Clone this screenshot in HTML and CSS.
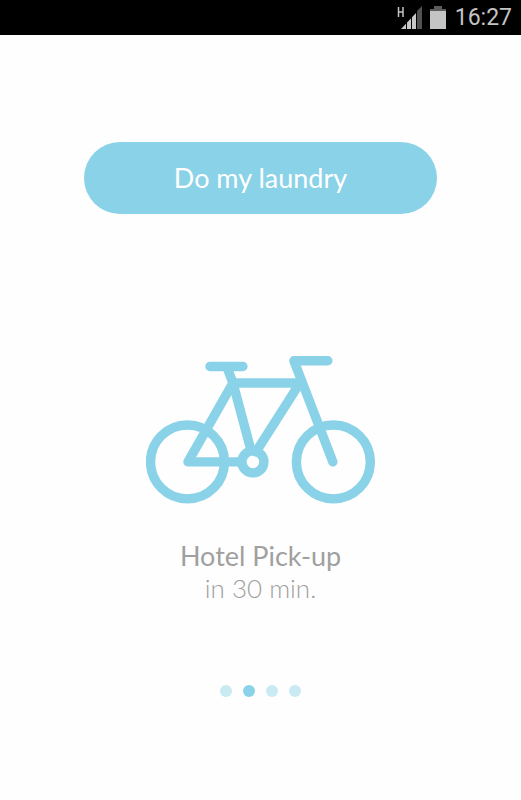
FILE: index.html
```html
<!DOCTYPE html>
<html lang="en">
<head>
<meta charset="UTF-8">
<meta name="viewport" content="width=device-width, initial-scale=1.0">
<title>Do my laundry</title>
<link rel="stylesheet" href="styles.css">
</head>
<body>
<header class="status-bar">
    <svg class="signal" viewBox="0 0 25 24" aria-hidden="true">
        <path d="M1.500 1v10M6 1v10M1.500 6H6" fill="none" stroke="#c4c4c4" stroke-width="1.500"/>
        <path d="M4 23L19 7v16z" fill="#c8c8c8"/>
        <path d="M20 5l5-5v23h-5z" fill="#515151"/>
        <path d="M9.500 15v8M14.500 10v13M19.500 5v18" stroke="#000" stroke-width="1"/>
    </svg>
    <svg class="battery" viewBox="0 0 16 24" aria-hidden="true">
        <path d="M4 0h8v3h4v3H0V3h4z" fill="#5c5c5c"/>
        <path d="M0 5h16v18H0z" fill="#c4c4c4"/>
    </svg>
    <span class="clock">16:27</span>
</header>
<main class="screen">
    <button class="laundry-button" type="button">Do my laundry</button>
    <svg class="bike" viewBox="0 0 230 148" aria-hidden="true">
        <g fill="none" stroke="#8ad2e7" stroke-width="9.4" stroke-linecap="round" stroke-linejoin="round">
            <circle cx="41.500" cy="106" r="37"/>
            <circle cx="187.500" cy="106" r="37"/>
            <circle cx="107" cy="106" r="11"/>
            <path d="M64 10.500h33"/>
            <path d="M81 11l6 16 18 67"/>
            <path d="M94 106H42l45-79h67l-44 69"/>
            <path d="M182 4.700h-34l39 101.300"/>
        </g>
    </svg>
    <section class="info">
        <h1>Hotel Pick-up</h1>
        <p>in 30 min.</p>
    </section>
    <nav class="dots" aria-label="Slides">
        <button class="dot" type="button" aria-label="Slide 1"></button>
        <button class="dot active" type="button" aria-label="Slide 2"></button>
        <button class="dot" type="button" aria-label="Slide 3"></button>
        <button class="dot" type="button" aria-label="Slide 4"></button>
    </nav>
</main>
</body>
</html>
```
FILE: styles.css
```css
* {
    box-sizing: border-box;
}
body {
    margin: 0;
    min-height: 100vh;
    background-color: #fefefe;
    font-family: Lato, sans-serif;
}
.status-bar {
    display: flex;
    justify-content: flex-end;
    align-items: center;
    height: 35px;
    padding: 0 9px;
    background-color: #000;
}
.signal {
    width: 25px;
    height: 24px;
    margin-right: 8px;
}
.battery {
    width: 16px;
    height: 24px;
    margin-right: 9px;
}
.clock {
    color: #c4c4c4;
    font-family: Roboto, sans-serif;
    font-size: 23px;
    line-height: 36px;
}
.screen {
    display: flex;
    flex-direction: column;
    align-items: center;
    padding: 107px 16px 48px;
}
.laundry-button {
    width: 72%;
    height: 72px;
    padding: 0;
    border: 0;
    border-radius: 36px;
    background-color: #8ad2e7;
    color: #fff;
    font-family: inherit;
    font-size: 27px;
    line-height: 32px;
}
.bike {
    width: 47%;
    margin-top: 142px;
}
.info {
    margin-top: 36px;
    color: #a0a0a0;
    font-size: 27px;
    line-height: 32px;
    text-align: center;
}
.info h1 {
    margin: 0;
    font-size: inherit;
    font-weight: 400;
}
.info p {
    margin: 0;
    font-size: 26px;
    font-weight: 300;
}
.dots {
    display: flex;
    gap: 11px;
    margin-top: 81px;
}
.dot {
    width: 12px;
    height: 12px;
    padding: 0;
    border: 0;
    border-radius: 50%;
    background-color: #c9eaf3;
}
.dot.active {
    background-color: #8ad2e7;
}
```
